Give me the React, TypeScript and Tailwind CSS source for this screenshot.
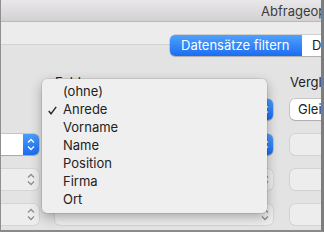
import React from 'react'

const items = ['(ohne)', 'Anrede', 'Vorname', 'Name', 'Position', 'Firma', 'Ort']

const Chevrons = ({ color }: { color: string }) => (
    <svg width="16" height="21" viewBox="0 0 16 21" fill="none">
        <polyline points="5,8.5 8,5.5 11,8.5" stroke={color} strokeWidth="1.3" />
        <polyline points="5,12.5 8,15.5 11,12.5" stroke={color} strokeWidth="1.3" />
    </svg>
)

const Select = ({ active, text }: { active?: boolean; text?: string }) => {
    if (active) {
        return (
            <div className="flex h-[21px] w-full rounded-[5px] bg-white shadow-[0_0_0_0.5px_rgba(0,0,0,0.25),0_1px_1px_rgba(0,0,0,0.15)]">
                <div className="flex-1 pl-2 text-[13px] leading-[21px] text-[#222]">{text}</div>
                <div className="w-4 rounded-r-[5px] bg-linear-to-b from-[#4a9dfb] to-[#1b6cf2]">
                    <Chevrons color="#ffffff" />
                </div>
            </div>
        )
    }
    return (
        <div className="flex h-[21px] w-full rounded-[5px] bg-[#ededed] shadow-[0_0_0_0.5px_rgba(0,0,0,0.12)]">
            <div className="flex-1" />
            <div className="w-4">
                <Chevrons color="#8e8e8e" />
            </div>
        </div>
    )
}

const Field = () => (
    <div className="h-[21px] w-full rounded-[5px] bg-[#ededed] shadow-[0_0_0_0.5px_rgba(0,0,0,0.14)]" />
)

export default function App() {
    return (
        <div className="relative flex h-[232px] w-[324px] flex-col overflow-hidden border-b-2 border-l border-r-[3px] border-b-[#8a8a8a] border-l-[#8f8f8f] border-r-[#7d7d7d] bg-[#e3e3e3] font-[family-name:Inter,sans-serif] text-[#222]">
            <div className="flex h-[22px] shrink-0 border-b border-[#b9b9b9] bg-linear-to-b from-[#e9e7e9] to-[#d3d1d3] pl-[260px] pt-[2px] text-[13px] leading-[18px] whitespace-nowrap text-[#3c3c3c]">
                Abfrageoptionen
            </div>
            <div className="h-[23px] shrink-0 border-b border-[#d2d2d2] bg-[#ececec]" />
            <div className="-mt-[10px] flex h-[21px] shrink-0 pl-[169px] whitespace-nowrap">
                <div className="flex rounded-[5px] bg-white shadow-[0_0_0_0.5px_rgba(0,0,0,0.25),0_1px_1px_rgba(0,0,0,0.12)]">
                    <div className="w-[132px] rounded-l-[5px] bg-linear-to-b from-[#4fa1fc] to-[#1c6cf2] pl-[11px] text-[13px] leading-[21px] text-white">
                        Datensätze filtern
                    </div>
                    <div className="pl-[10px] pr-3 text-[13px] leading-[21px] text-[#222]">
                        Datensätze sortieren
                    </div>
                </div>
            </div>
            <div className="mt-[18px] flex h-4 shrink-0 whitespace-nowrap text-[13px] leading-4">
                <div className="-ml-[42px] w-[80px] shrink-0" />
                <div className="ml-4 w-[218px] shrink-0">Feld</div>
                <div className="ml-[17px] w-[100px] shrink-0">Vergleich</div>
            </div>
            <div className="mt-[9px] flex">
                <div className="-ml-[42px] flex w-[80px] shrink-0 flex-col gap-[14px]">
                    <div className="h-[21px]" />
                    <Select active />
                    <Select />
                    <Select />
                </div>
                <div className="ml-4 flex w-[218px] shrink-0 flex-col gap-[14px]">
                    <Select active text="Anrede" />
                    <Select active />
                    <Select />
                    <Select />
                </div>
                <div className="ml-[17px] flex w-[100px] shrink-0 flex-col gap-[14px]">
                    <div className="h-[21px] rounded-[5px] bg-white pl-2 text-[13px] leading-[21px] shadow-[0_0_0_0.5px_rgba(0,0,0,0.25),0_1px_1px_rgba(0,0,0,0.12)]">
                        Gleich
                    </div>
                    <Field />
                    <Field />
                    <Field />
                </div>
            </div>
            <div className="absolute left-[41px] top-[79px] h-[134px] w-[225px] rounded-[5px] bg-[#efefef] py-1 shadow-[0_0_0_0.5px_rgba(0,0,0,0.15),0_4px_12px_rgba(0,0,0,0.3)]">
                {items.map((item) => (
                    <div key={item} className="flex h-[18px] items-center text-[13px]">
                        <div className="flex w-[21px] justify-end pr-[6px]">
                            {item === 'Anrede' && (
                                <svg width="9" height="9" viewBox="0 0 9 9" fill="none">
                                    <polyline points="0.8,5 3,7.8 8.2,0.8" stroke="#222" strokeWidth="1.4" />
                                </svg>
                            )}
                        </div>
                        <span>{item}</span>
                    </div>
                ))}
            </div>
        </div>
    )
}
